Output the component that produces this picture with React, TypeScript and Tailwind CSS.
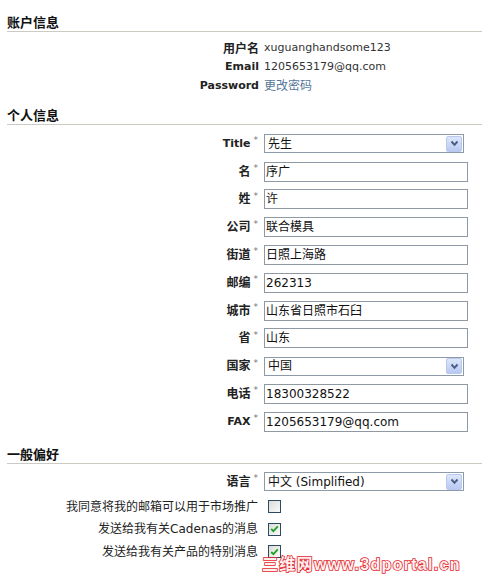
import React from 'react';

const Section: React.FC<{ title: string; className?: string }> = ({ title, className }) => (
    <div className={`ml-[7px] h-[18px] border-b border-[#cbcbc3] text-[13px] font-bold leading-[17px] text-[#111] ${className ?? ''}`}>
        {title}
    </div>
);

const InfoRow: React.FC<{ label: string; zh?: boolean; children: React.ReactNode }> = ({ label, zh, children }) => (
    <div className="flex h-[19px] items-center">
        <div className={`w-[259px] text-right font-bold text-[#222] ${zh ? 'text-[12px]' : 'text-[11px]'}`}>{label}</div>
        <div className="ml-[5px]">{children}</div>
    </div>
);

const Chevron = () => (
    <div className="mr-[1px] flex h-[16px] w-[16px] items-center justify-center rounded-[2px] border border-[#b9c8ec] bg-gradient-to-b from-[#dde6fb] to-[#b8c9f2]">
        <svg width="9" height="7" viewBox="0 0 9 7">
            <path d="M1.5 1.5 L4.5 4.8 L7.5 1.5" fill="none" stroke="#4a5d86" strokeWidth="2" />
        </svg>
    </div>
);

const Select: React.FC<{ value: string }> = ({ value }) => (
    <div className="flex h-[19px] w-[200px] items-center justify-between border border-[#8d9aa8] bg-white pl-[3px] text-[12px] text-[#111]">
        <span>{value}</span>
        <Chevron />
    </div>
);

const Input: React.FC<{ value: string }> = ({ value }) => (
    <div className="h-[20px] w-[204px] border border-[#8e99a3] bg-white px-[1px] text-[12px] leading-[18px] text-[#111]">{value}</div>
);

const FormRow: React.FC<{ label: string; zh?: boolean; children: React.ReactNode }> = ({ label, zh = true, children }) => (
    <div className="flex h-[27.8px] items-center">
        <div className="flex w-[258px] items-center justify-end">
            <span className={`font-bold text-[#222] ${zh ? 'text-[12px]' : 'text-[11px]'}`}>{label}</span>
            <span className="relative -top-[3px] ml-[3px] text-[9px] text-[#777]">*</span>
        </div>
        <div className="ml-[6px]">{children}</div>
    </div>
);

const Checkbox: React.FC<{ checked?: boolean }> = ({ checked }) => (
    <div className="flex h-[13px] w-[13px] items-center justify-center border border-[#2a4a66] bg-gradient-to-br from-[#dcdcd6] to-[#fafafa]">
        {checked && (
            <svg width="9" height="8" viewBox="0 0 9 8">
                <path d="M1.2 4 L3.4 6.2 L7.8 1.4" fill="none" stroke="#22a22a" strokeWidth="1.8" />
            </svg>
        )}
    </div>
);

const CheckRow: React.FC<{ label: string; checked?: boolean }> = ({ label, checked }) => (
    <div className="flex h-[22.5px] items-center">
        <div className="w-[258px] text-right text-[12px] text-[#222]">{label}</div>
        <div className="ml-[10px]"><Checkbox checked={checked} /></div>
    </div>
);

export default function App() {
    return (
        <div className="relative h-[579px] w-[482px] overflow-hidden bg-white pt-[14px] font-['DejaVu_Sans','Noto_Sans_CJK_SC',sans-serif] text-[11px] text-[#333]">
            <Section title="账户信息" />
            <div className="mt-[7px]">
                <InfoRow label="用户名" zh>xuguanghandsome123</InfoRow>
                <InfoRow label="Email">1205653179@qq.com</InfoRow>
                <InfoRow label="Password"><span className="text-[12px] text-[#56779a]">更改密码</span></InfoRow>
            </div>

            <Section title="个人信息" className="mt-[11px]" />
            <div className="mt-[5px]">
                <FormRow label="Title" zh={false}><Select value="先生" /></FormRow>
                <FormRow label="名"><Input value="序广" /></FormRow>
                <FormRow label="姓"><Input value="许" /></FormRow>
                <FormRow label="公司"><Input value="联合模具" /></FormRow>
                <FormRow label="街道"><Input value="日照上海路" /></FormRow>
                <FormRow label="邮编"><Input value="262313" /></FormRow>
                <FormRow label="城市"><Input value="山东省日照市石臼" /></FormRow>
                <FormRow label="省"><Input value="山东" /></FormRow>
                <FormRow label="国家"><Select value="中国" /></FormRow>
                <FormRow label="电话"><Input value="18300328522" /></FormRow>
                <FormRow label="FAX" zh={false}><Input value="1205653179@qq.com" /></FormRow>
            </div>

            <Section title="一般偏好" className="mt-[10px]" />
            <div className="mt-[4px]">
                <FormRow label="语言"><Select value="中文 (Simplified)" /></FormRow>
                <CheckRow label="我同意将我的邮箱可以用于市场推广" />
                <CheckRow label="发送给我有关Cadenas的消息" checked />
                <CheckRow label="发送给我有关产品的特别消息" checked />
            </div>

            {/* watermark */}
            <div className="absolute left-[262px] top-[555px] whitespace-nowrap font-['Liberation_Sans','Noto_Sans_CJK_SC',sans-serif] text-[16px] font-bold leading-[20px] tracking-[1.3px] text-[#fff0f0] [-webkit-text-stroke:1.6px_#e3242b] [paint-order:stroke_fill]">
                三维网www.3dportal.cn
            </div>
        </div>
    );
}
